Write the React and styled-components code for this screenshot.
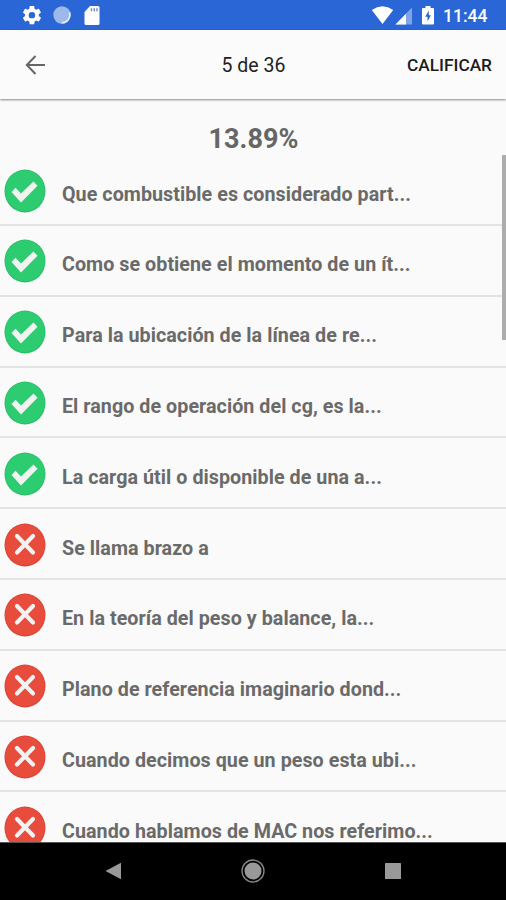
import styled, { createGlobalStyle } from "styled-components"

const GlobalStyle = createGlobalStyle`
    * {
        box-sizing: border-box;
    }
    body {
        margin: 0;
        background-color: #fafafa;
        font-family: Roboto, "Liberation Sans", sans-serif;
    }
`

const Screen = styled.div`
    display: flex;
    flex-direction: column;
    width: 506px;
    height: 900px;
    overflow: hidden;
    background-color: #fafafa;
`

const StatusBar = styled.div`
    flex: none;
    display: flex;
    justify-content: space-between;
    height: 30px;
    padding: 0 18px 0 22px;
    background-color: #2a66d5;
    color: #fff;
`

const StatusGroup = styled.div`
    display: flex;
    align-items: center;
`

const StatusIcon = styled.svg`
    display: block;
    width: ${(props) => props.$width}px;
    height: 30px;
    margin-right: ${(props) => props.$gap}px;
`

const Clock = styled.span`
    width: 45px;
    padding-top: 2px;
    font-size: 17.5px;
    font-weight: 500;
    line-height: 28px;
    white-space: nowrap;
`

const Header = styled.header`
    flex: none;
    display: grid;
    grid-template-columns: 1fr 70px 1fr;
    align-items: center;
    height: 69px;
    padding: 0 14px 0 25px;
    background-color: #fbfbfb;
    box-shadow: 0 1px 2px rgba(0, 0, 0, 0.45);
    z-index: 1;
`

const BackIcon = styled.svg`
    display: block;
    width: 21px;
    height: 20px;
`

const HeaderTitle = styled.h1`
    margin: 3px 0 0 -2px;
    font-size: 19.5px;
    font-weight: 400;
    line-height: 24px;
    color: #222;
    white-space: nowrap;
`

const GradeButton = styled.button`
    justify-self: end;
    margin-top: 1px;
    padding: 0;
    border: none;
    background: none;
    font-family: inherit;
    font-size: 17.3px;
    font-weight: 500;
    line-height: 24px;
    color: #1c1c1c;
`

const Content = styled.main`
    flex: 1;
    min-height: 0;
    position: relative;
    overflow: hidden;
`

const Score = styled.h2`
    height: 56.2px;
    margin: 0;
    padding: 24px 0 0 1px;
    text-align: center;
    font-size: 27px;
    font-weight: 700;
    line-height: 32px;
    color: #666;
`

const Question = styled.div`
    display: flex;
    align-items: center;
    height: 70.8px;
    padding-left: 4px;
    border-bottom: 2px solid #e3e3e3;
`

const ResultIcon = styled.svg`
    display: block;
    width: 42px;
    height: 44px;
    margin-top: 2px;
`

const QuestionText = styled.span`
    margin: 10px 0 0 16px;
    font-size: 19.7px;
    font-weight: 700;
    line-height: 24px;
    letter-spacing: 0.05px;
    color: #6a6a6a;
    white-space: nowrap;
`

const Scrollbar = styled.div`
    position: absolute;
    top: 56px;
    right: 0;
    width: 4px;
    height: 185px;
    background-color: #adadad;
`

const NavBar = styled.nav`
    flex: none;
    display: grid;
    grid-template-columns: 140px 140px 140px;
    justify-content: center;
    align-items: center;
    justify-items: center;
    height: 58px;
    padding-bottom: 2px;
    border-top: 1px solid #555;
    background-color: #000;
`

const NavIcon = styled.svg`
    display: block;
    width: 24px;
    height: 24px;
`

const questions = [
    { text: "Que combustible es considerado part...", correct: true },
    { text: "Como se obtiene el momento de un ít...", correct: true },
    { text: "Para la ubicación de la línea de re...", correct: true },
    { text: "El rango de operación del cg, es la...", correct: true },
    { text: "La carga útil o disponible de una a...", correct: true },
    { text: "Se llama brazo a", correct: false },
    { text: "En la teoría del peso y balance, la...", correct: false },
    { text: "Plano de referencia imaginario dond...", correct: false },
    { text: "Cuando decimos que un peso esta ubi...", correct: false },
    { text: "Cuando hablamos de MAC nos referimo...", correct: false },
]

function Result({ correct }) {
  return (
    <ResultIcon viewBox="0 0 42 44">
      <ellipse cx="21" cy="22" rx="20.5" ry="21.5" fill={correct ? "#27bd66" : "#d84335"} />
      <ellipse cx="21" cy="21.8" rx="19.7" ry="20.5" fill={correct ? "#2ecc71" : "#e74c3c"} />
      {correct ? (
        <path d="M7.5 23L11.5 18.8L17 24.5L29.5 12.5L33.5 16.7L17 33.5Z" fill="#f1f3f1" />
      ) : (
        <path d="M13 13L29 29.5M29 13L13 29.5" stroke="#f3f3f3" strokeWidth="4.2" strokeLinecap="round" />
      )}
    </ResultIcon>
  )
}

function App() {
  return (
    <>
    <GlobalStyle />
    <Screen>
        <StatusBar>
            <StatusGroup>
                <StatusIcon $width={20} $gap={10} viewBox="0 0 20 30">
                    <g transform="translate(-1.1 4.1) scale(.92)" fill="#fff">
                        <path d="M19.43 12.98c.04-.32.07-.64.07-.98s-.03-.66-.07-.98l2.11-1.65c.19-.15.24-.42.12-.64l-2-3.46c-.12-.22-.39-.3-.61-.22l-2.49 1c-.52-.4-1.08-.73-1.69-.98l-.38-2.65C14.46 2.18 14.25 2 14 2h-4c-.25 0-.46.18-.49.42l-.38 2.65c-.61.25-1.17.59-1.69.98l-2.49-1c-.23-.09-.49 0-.61.22l-2 3.46c-.13.22-.07.49.12.64l2.11 1.65c-.04.32-.07.65-.07.98s.03.66.07.98l-2.11 1.65c-.19.15-.24.42-.12.64l2 3.46c.12.22.39.3.61.22l2.49-1c.52.4 1.08.73 1.69.98l.38 2.65c.03.24.24.42.49.42h4c.25 0 .46-.18.49-.42l.38-2.65c.61-.25 1.17-.59 1.69-.98l2.49 1c.23.09.49 0 .61-.22l2-3.46c.12-.22.07-.49-.12-.64l-2.11-1.65zM12 15.5A3.5 3.5 0 1 1 12 8.5a3.5 3.5 0 0 1 0 7z" />
                    </g>
                </StatusIcon>
                <StatusIcon $width={20} $gap={12} viewBox="0 0 20 30">
                    <circle cx="10" cy="15" r="8.7" fill="#9db9ec" />
                    <path d="M17.6 12.5A8 8 0 0 1 9.5 22.8" fill="none" stroke="#e4ecfb" strokeWidth="1.5" />
                </StatusIcon>
                <StatusIcon $width={16} $gap={0} viewBox="0 0 16 30">
                    <path d="M6 6h8q1.5 0 1.5 1.5v16q0 1.5-1.5 1.5H2Q.5 25 .5 23.5V12Z" fill="#fff" />
                    <path d="M7.5 8.2v3M10.3 8.2v3M13 8.2v3" stroke="#5e89db" strokeWidth="1.4" />
                </StatusIcon>
            </StatusGroup>
            <StatusGroup>
                <StatusIcon $width={23} $gap={1} viewBox="0 0 23 30">
                    <path d="M.8 10Q11.5 2.6 22.2 10L11.5 24Z" fill="#fff" />
                </StatusIcon>
                <StatusIcon $width={18} $gap={9} viewBox="0 0 18 30">
                    <path d="M17 7.5v17H.5Z" fill="#80a3e5" />
                    <path d="M11 13.7v10.8H.5Z" fill="#fff" />
                </StatusIcon>
                <StatusIcon $width={12} $gap={9} viewBox="0 0 12 30">
                    <path d="M3.5 6h5v2H11q1 0 1 1v14.5q0 1-1 1H1q-1 0-1-1V9q0-1 1-1h2.5Z" fill="#fff" />
                    <path d="M6.8 10.5L3.2 16.7h2.3v4.8l3.4-6.2H6.8Z" fill="#2a66d5" />
                </StatusIcon>
                <Clock>11:44</Clock>
            </StatusGroup>
        </StatusBar>

        <Header>
            <BackIcon viewBox="0 0 21 20" fill="none" stroke="#666" strokeWidth="2">
                <path d="M20 10H2M10.5 1L1.8 10L10.5 19" />
            </BackIcon>
            <HeaderTitle>5 de 36</HeaderTitle>
            <GradeButton>CALIFICAR</GradeButton>
        </Header>

        <Content>
            <Score>13.89%</Score>
            {questions.map((question) => (
                <Question key={question.text}>
                    <Result correct={question.correct} />
                    <QuestionText>{question.text}</QuestionText>
                </Question>
            ))}
            <Scrollbar />
        </Content>

        <NavBar>
            <NavIcon viewBox="0 0 24 24">
                <path d="M4.5 12L20 3.8V20.2Z" fill="#999" />
            </NavIcon>
            <NavIcon viewBox="0 0 24 24">
                <circle cx="12" cy="12" r="11" fill="none" stroke="#888" strokeWidth="1.3" />
                <circle cx="12" cy="12" r="8.5" fill="#999" />
            </NavIcon>
            <NavIcon viewBox="0 0 24 24">
                <rect x="4" y="4" width="16" height="16" rx="0.6" fill="#999" />
            </NavIcon>
        </NavBar>
    </Screen>
    </>
  );
}

export default App;
